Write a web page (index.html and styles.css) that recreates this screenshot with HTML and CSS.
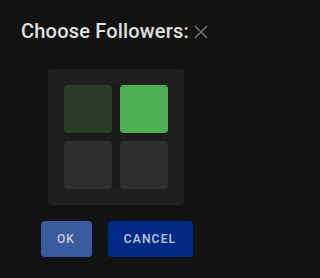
FILE: index.html
```html
<!DOCTYPE html>
<html>
<head>
<meta charset="utf-8">
<link rel="stylesheet" href="styles.css">
</head>
<body>
<div class="dialog">
  <div class="title-row">
    <h1 class="title">Choose Followers:</h1>
    <svg class="close" width="14" height="14" viewBox="0 0 14 14"><path d="M1 1L13 13M13 1L1 13" stroke="#707070" stroke-width="1.6" fill="none"/></svg>
  </div>
  <div class="panel">
    <div class="grid">
      <div class="cell cell-dim"></div>
      <div class="cell cell-on"></div>
      <div class="cell cell-off"></div>
      <div class="cell cell-off"></div>
    </div>
  </div>
  <div class="actions">
    <button class="btn btn-ok">OK</button>
    <button class="btn btn-cancel">CANCEL</button>
  </div>
</div>
</body>
</html>
```
FILE: styles.css
```css
html, body {
  margin: 0;
  padding: 0;
  background: #121212;
  width: 232px;
  height: 278px;
  overflow: hidden;
  font-family: Roboto, "Liberation Sans", sans-serif;
}
.dialog {
  display: flex;
  flex-direction: column;
  align-items: center;
  padding-top: 19px;
}
.title-row {
  display: flex;
  align-items: center;
  gap: 5px;
  height: 24px;
  padding-right: 3px;
}
.title {
  margin: 0;
  font-size: 20px;
  font-weight: 500;
  letter-spacing: 0.18px;
  line-height: 24px;
  color: #e0e0e0;
}
.close {
  display: block;
  margin-top: 2px;
}
.panel {
  margin-top: 26px;
  width: 136px;
  height: 136px;
  box-sizing: border-box;
  padding: 16px;
  background: #1f1f1f;
  border-radius: 4px;
}
.grid {
  display: grid;
  grid-template-columns: 48px 48px;
  grid-template-rows: 48px 48px;
  gap: 8px;
  background: #1b1b1b;
}
.cell {
  border-radius: 4px;
}
.cell-dim { background: #293d29; }
.cell-on { background: #4caf50; }
.cell-off { background: #2e2e2e; }
.actions {
  display: flex;
  gap: 16px;
  margin-top: 16px;
  padding-left: 1px;
}
.btn {
  height: 36px;
  border: none;
  border-radius: 4px;
  font-family: Roboto, "Liberation Sans", sans-serif;
  font-size: 12px;
  font-weight: 500;
  letter-spacing: 1.2px;
  color: #c5cbdd;
}
.btn-ok { background: #3a5b9d; width: 51px; padding: 0; }
.btn-cancel { background: #002a85; width: 85px; padding: 0; }
```
